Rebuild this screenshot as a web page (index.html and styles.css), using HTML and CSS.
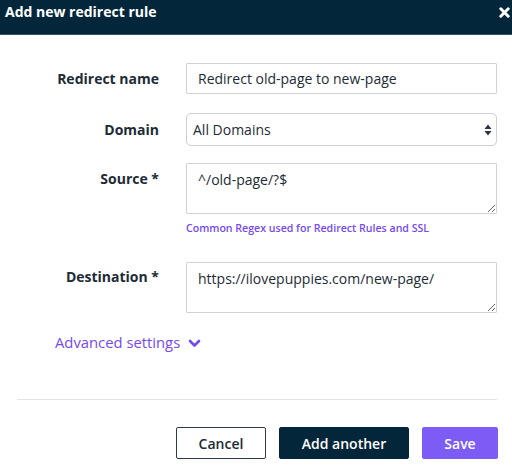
FILE: index.html
```html
<!DOCTYPE html>
<html>
<head>
<meta charset="utf-8">
<link rel="stylesheet" href="styles.css">
</head>
<body>
<div class="modal">
  <header class="modal-header">
    <h1 class="modal-title">Add new redirect rule</h1>
    <button class="close-btn" aria-label="Close">
      <svg width="11" height="11" viewBox="0 0 11 11"><path d="M1.8 1.8 L9.2 9.2 M9.2 1.8 L1.8 9.2" stroke="#fff" stroke-width="3" stroke-linecap="round"/></svg>
    </button>
  </header>
  <form class="form">
    <div class="row row-name">
      <label class="label">Redirect name</label>
      <input class="input" type="text" value="Redirect old-page to new-page">
    </div>
    <div class="row row-domain">
      <label class="label">Domain</label>
      <div class="select">
        <span>All Domains</span>
        <svg width="8" height="12" viewBox="0 0 8 12"><path d="M4 0.5 L7.5 5 L0.5 5 Z M4 11.5 L7.5 7 L0.5 7 Z" fill="#2b3540"/></svg>
      </div>
    </div>
    <div class="row row-source">
      <label class="label">Source *</label>
      <div class="field">
        <textarea class="textarea">^/old-page/?$</textarea>
        <a class="help">Common Regex used for Redirect Rules and SSL</a>
      </div>
    </div>
    <div class="row row-dest">
      <label class="label">Destination *</label>
      <textarea class="textarea">https://ilovepuppies.com/new-page/</textarea>
    </div>
    <div class="advanced">
      <span>Advanced settings</span>
      <svg width="13" height="9" viewBox="0 0 13 9"><path d="M2 2 L6.5 6.5 L11 2" fill="none" stroke="#7549f2" stroke-width="2.6" stroke-linecap="round" stroke-linejoin="round"/></svg>
    </div>
  </form>
  <div class="divider"></div>
  <footer class="footer">
    <button class="btn btn-cancel">Cancel</button>
    <button class="btn btn-dark">Add another</button>
    <button class="btn btn-primary">Save</button>
  </footer>
</div>
</body>
</html>
```

FILE: styles.css
```css
* { box-sizing: border-box; }
html, body { margin: 0; padding: 0; background: #fff; }
body {
  font-family: "Open Sans", "Noto Sans", "Liberation Sans", sans-serif;
  color: #1d2b36;
  width: 512px;
  height: 472px;
  overflow: hidden;
}
.modal-header {
  height: 35px;
  background: #03263a;
  display: flex;
  justify-content: space-between;
  align-items: flex-start;
  border-bottom: 1px solid #3a5568;
}
.modal-title {
  margin: 0;
  padding: 1px 0 0 5px;
  font-size: 14px;
  font-weight: 700;
  line-height: 22px;
  color: #fff;
}
.close-btn {
  background: none;
  border: 0;
  padding: 0;
  margin: 7px 2px 0 0;
  width: 11px;
  height: 11px;
  display: flex;
}
.form {
  padding-top: 28px;
}
.row {
  display: grid;
  grid-template-columns: 159px 311px;
  column-gap: 27px;
}
.label {
  text-align: right;
  font-weight: 700;
  font-size: 14px;
  color: #1d2b36;
  line-height: 20px;
}
.row-name .label { padding-top: 6px; }
.row-domain { margin-top: 19px; }
.row-domain .label { padding-top: 7px; }
.row-source { margin-top: 17px; }
.row-source .label { padding-top: 6px; }
.row-dest { margin-top: 27px; }
.row-dest .label { padding-top: 5px; }
.input {
  height: 31px;
  border: 1px solid #d2d2d2;
  border-radius: 1px;
  font-family: inherit;
  font-size: 14px;
  color: #1d2b36;
  padding: 0 11px;
  outline: none;
}
.select {
  height: 33px;
  border: 1px solid #cfcfcf;
  border-radius: 5px;
  display: flex;
  align-items: center;
  justify-content: space-between;
  padding: 0 4px 0 6px;
  font-size: 14px;
  color: #1d2b36;
}
.field { display: flex; flex-direction: column; }
.textarea {
  height: 51px;
  width: 311px;
  border: 1px solid #d2d2d2;
  border-radius: 1px;
  font-family: inherit;
  font-size: 14px;
  line-height: 19px;
  color: #1d2b36;
  padding: 6px 11px;
  resize: vertical;
  outline: none;
  display: block;
}
.help {
  margin-top: 7px;
  font-size: 10.6px;
  font-weight: 600;
  color: #7549f2;
  line-height: 14px;
}
.advanced {
  margin: 19px 0 0 55px;
  display: flex;
  align-items: center;
  gap: 8px;
  font-size: 14.8px;
  color: #7549f2;
  line-height: 20px;
}
.advanced svg { margin-top: 2px; }
.divider {
  margin: 47px 15px 0 17px;
  height: 1px;
  background: #e4e4e4;
}
.footer {
  display: flex;
  justify-content: flex-end;
  gap: 13px;
  padding: 27px 14px 0 0;
}
.btn {
  height: 32px;
  font-family: inherit;
  font-size: 14px;
  font-weight: 600;
  border-radius: 2px;
  padding: 0;
}
.btn-cancel {
  width: 90px;
  background: #fff;
  border: 1px solid #2b3a46;
  color: #1d2b36;
}
.btn-dark {
  width: 130px;
  background: #03263a;
  border: 1px solid #03263a;
  color: #fff;
}
.btn-primary {
  width: 76px;
  background: #7c5cf5;
  border: 1px solid #7c5cf5;
  color: #fff;
}
```
